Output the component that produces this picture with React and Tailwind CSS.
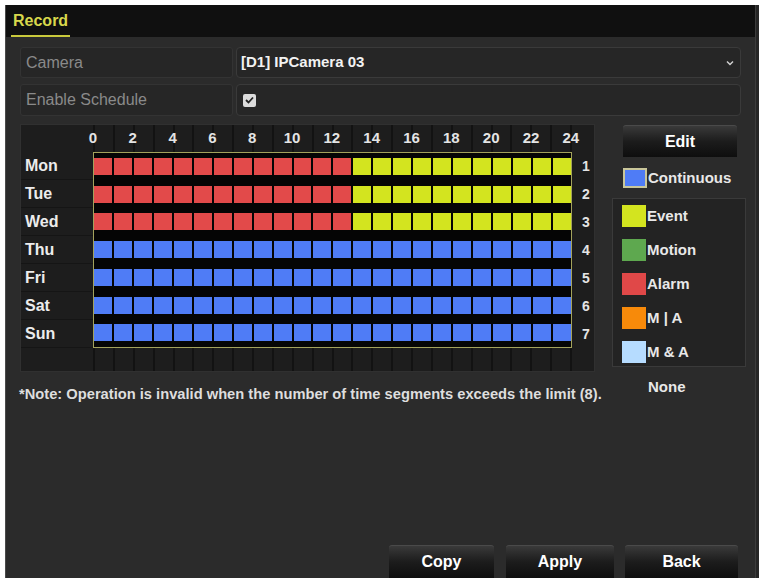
import React from "react";

const RED = "#e24a4a";
const YEL = "#d3e41f";
const BLUE = "#4f7cf6";

const days = [
  { name: "Mon", split: 13 },
  { name: "Tue", split: 13 },
  { name: "Wed", split: 13 },
  { name: "Thu", split: 0 },
  { name: "Fri", split: 0 },
  { name: "Sat", split: 0 },
  { name: "Sun", split: 0 },
];

const hours = Array.from({ length: 24 }, (_, i) => i);
const marks = [0, 2, 4, 6, 8, 10, 12, 14, 16, 18, 20, 22, 24];

const legend = [
  { label: "Event", color: "#d3e41f" },
  { label: "Motion", color: "#5ea84f" },
  { label: "Alarm", color: "#e04848" },
  { label: "M | A", color: "#f78a0a" },
  { label: "M & A", color: "#b6dcff" },
];

const ticks =
  "bg-[image:repeating-linear-gradient(90deg,#121212_0px,#121212_2px,transparent_2px,transparent_19.875px)]";

const Cell = ({ color }) => <div className="flex-1 h-full" style={{ background: color }} />;

const ScheduleGrid = () => (
  <div className="w-[575px] h-[248px] bg-[#1d1d1d] border border-[#303030] flex flex-col">
    <div className="h-[27px] flex">
      <div className="w-[72px]" />
      <div className={`relative w-[479px] h-full ${ticks}`}>
        <div className="absolute inset-y-0 -left-[20px] flex">
          {marks.map((m) => (
            <div key={m} className="w-[39.83px] flex items-center justify-center text-[15px] font-bold text-[#e4e4e4]">
              {m}
            </div>
          ))}
        </div>
      </div>
    </div>

    <div className="h-[196px] flex">
      <div className="w-[72px] flex flex-col">
        {days.map((d) => (
          <div key={d.name} className="flex-1 flex items-center pl-[4px] border-b border-[#151515] text-[16px] font-bold text-[#ececec]">
            {d.name}
          </div>
        ))}
      </div>
      <div className="w-[479px] border border-[#a3a25c] bg-[#050505] flex flex-col">
        {days.map((d) => (
          <div key={d.name} className="flex-1 pt-[5px]">
            <div className="h-[17px] flex gap-[2px]">
              {hours.map((h) => (
                <Cell key={h} color={d.split === 0 ? BLUE : h < d.split ? RED : YEL} />
              ))}
            </div>
          </div>
        ))}
      </div>
      <div className="w-[22px] flex flex-col">
        {days.map((d, i) => (
          <div key={d.name} className="flex-1 flex items-center pl-[10px] text-[14px] font-bold text-[#e4e4e4]">
            {i + 1}
          </div>
        ))}
      </div>
    </div>

    <div className="flex-1 flex">
      <div className="w-[72px]" />
      <div className={`w-[479px] h-full ${ticks}`} />
    </div>
  </div>
);

const DarkButton = ({ children, className = "" }) => (
  <button
    className={`bg-gradient-to-b from-[#3a3a3a] via-[#1c1c1c] to-[#0e0e0e] border-t border-[#4a4a4a] rounded-t-[3px] text-white font-bold text-[16px] ${className}`}
  >
    {children}
  </button>
);

const App = () => {
  return (
    <div
      className="w-[759px] h-[578px] bg-white pl-[5px] pt-[5px] overflow-hidden"
      style={{ fontFamily: '"Liberation Sans", Arial, sans-serif' }}
    >
      <div className="h-[573px] flex">
        <div className="w-[750px] h-full bg-[#2b2b2b] border-l border-[#4a4a4a] flex flex-col">
          <div className="h-[32px] bg-[#101010] flex items-end pl-[5px]">
            <div className="h-[30px] flex items-center px-[2px] border-b-2 border-[#c9c93c] text-[16px] font-bold text-[#d8d84c]">
              Record
            </div>
          </div>

          <div className="flex-1 flex flex-col px-[14px] pt-[10px]">
            <div className="h-[31px] flex gap-[3px]">
              <div className="w-[213px] bg-[#262626] border border-[#333] rounded-[3px] flex items-center pl-[5px] text-[16px] text-[#8a8a8a]">
                Camera
              </div>
              <div className="flex-1 bg-[#262626] border border-[#3a3a3a] rounded-[4px] flex items-center pl-[4px] pr-[6px] text-[15px] font-bold text-[#f2f2f2]">
                <span className="flex-1">[D1] IPCamera 03</span>
                <svg width="8" height="6" viewBox="0 0 8 6">
                  <path d="M1 1.5 L4 4.5 L7 1.5" stroke="#cfcfcf" strokeWidth="1.5" fill="none" />
                </svg>
              </div>
            </div>

            <div className="h-[32px] mt-[6px] flex gap-[3px]">
              <div className="w-[213px] bg-[#262626] border border-[#333] rounded-[3px] flex items-center pl-[5px] text-[16px] text-[#8a8a8a]">
                Enable Schedule
              </div>
              <div className="flex-1 bg-[#262626] border border-[#3a3a3a] rounded-[4px] flex items-center pl-[6px]">
                <div className="w-[13px] h-[13px] bg-[#dcdcdc] rounded-[2px] flex items-center justify-center">
                  <svg width="9" height="8" viewBox="0 0 9 8">
                    <path d="M1 4 L3.5 6.5 L8 1.5" stroke="#222" strokeWidth="1.8" fill="none" />
                  </svg>
                </div>
              </div>
            </div>

            <div className="mt-[8px] flex">
              <ScheduleGrid />
              <div className="ml-[17px] w-[134px] flex flex-col shrink-0">
                <DarkButton className="ml-[11px] w-[114px] h-[32px] mt-[1px] text-[15px]">Edit</DarkButton>
                <div className="mt-[11px] ml-[11px] h-[20px] flex items-center">
                  <div className="w-[24px] h-[20px] border-2 border-[#c9c69a] bg-[#4f7cf6]" />
                  <span className="ml-[1px] text-[15px] font-bold text-[#e8e8e8]">Continuous</span>
                </div>
                <div className="mt-[10px] w-[134px] h-[169px] bg-[#232323] border border-[#3a3a3a] pt-[6px] pl-[9px] flex flex-col gap-[12px]">
                  {legend.map((l) => (
                    <div key={l.label} className="h-[22px] flex items-center">
                      <div className="w-[24px] h-[22px]" style={{ background: l.color }} />
                      <span className="ml-[1px] text-[15px] font-bold text-[#e8e8e8]">{l.label}</span>
                    </div>
                  ))}
                </div>
              </div>
            </div>

            <div className="mt-[7px] flex">
              <p className="-ml-[1px] w-[629px] pt-[7px] leading-[16px] text-[14.7px] font-bold text-[#dedede]">
                *Note: Operation is invalid when the number of time segments exceeds the limit (8).
              </p>
              <span className="leading-[16px] text-[15px] font-bold text-[#e8e8e8]">None</span>
            </div>

            <div className="mt-auto flex justify-end pr-[3px]">
              <DarkButton className="w-[105px] h-[33px]">Copy</DarkButton>
              <DarkButton className="ml-[12px] w-[108px] h-[33px]">Apply</DarkButton>
              <DarkButton className="ml-[11px] w-[113px] h-[33px]">Back</DarkButton>
            </div>
          </div>
        </div>
        <div className="w-[4px] h-full bg-[#262626] border-l border-[#3c3c3c]" />
      </div>
    </div>
  );
};

export default App;
